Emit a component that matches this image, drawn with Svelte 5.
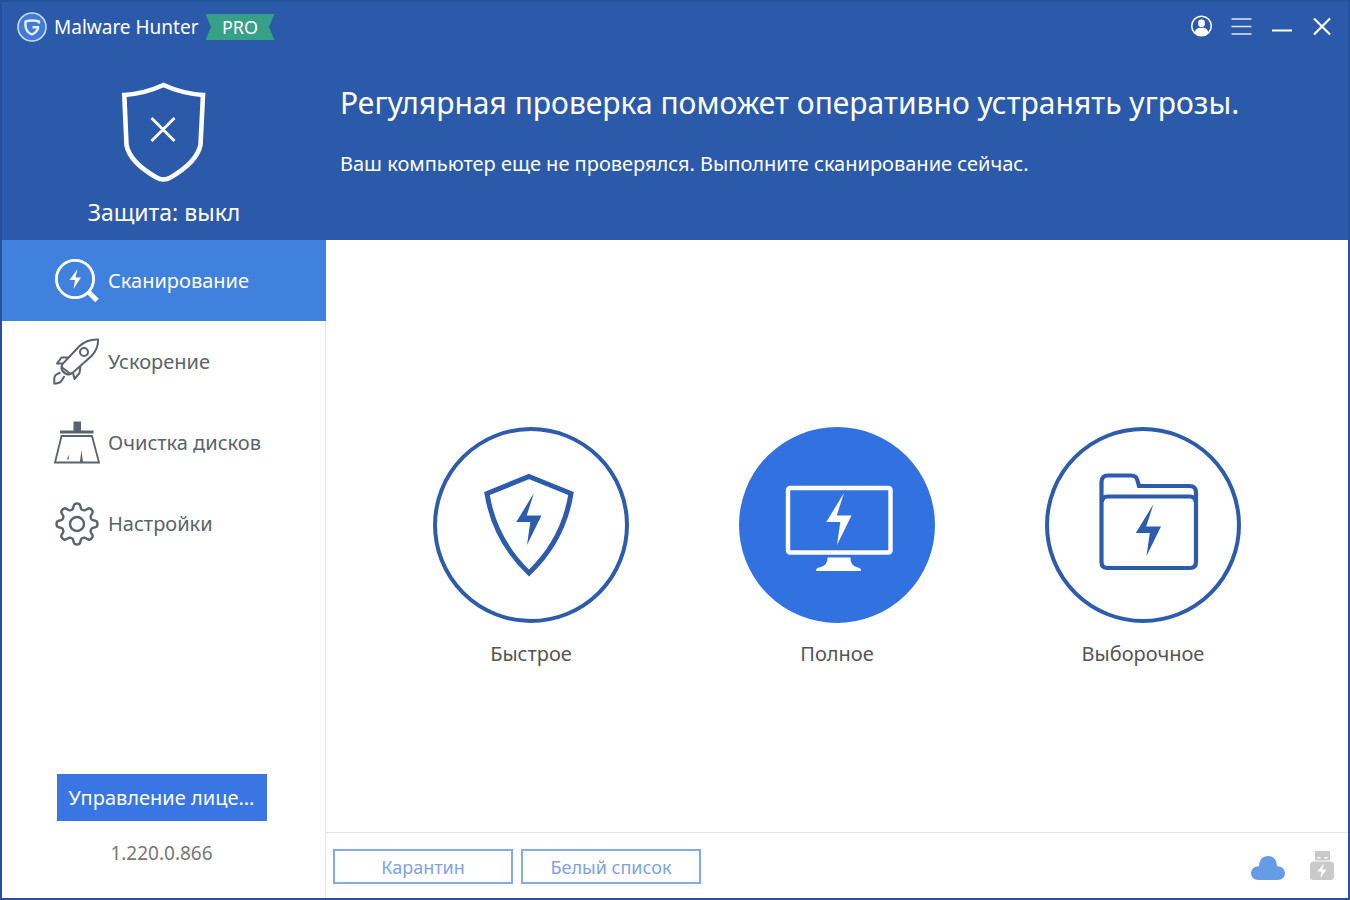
<script lang="ts">
	type Section = 'scan' | 'boost' | 'clean' | 'settings';

	let active = $state<Section>('scan');
	let mode = $state('full');

	const sections: { id: Section; label: string }[] = [
		{ id: 'scan', label: 'Сканирование' },
		{ id: 'boost', label: 'Ускорение' },
		{ id: 'clean', label: 'Очистка дисков' },
		{ id: 'settings', label: 'Настройки' }
	];

	const modes = [
		{ id: 'quick', label: 'Быстрое' },
		{ id: 'full', label: 'Полное' },
		{ id: 'custom', label: 'Выборочное' }
	];

	const bolt = 'M101 66 83.3 95H97.3L94 118 108.5 88.5H93.7Z';

	// eight rounded teeth
	function gear(cx: number, cy: number) {
		const points: string[] = [];
		for (let i = 0; i < 160; i++) {
			const a = (i / 160) * Math.PI * 2;
			const r = 17.8 + 2.8 * Math.tanh(1.8 * Math.cos(8 * a));
			points.push(`${(cx + r * Math.sin(a)).toFixed(2)} ${(cy - r * Math.cos(a)).toFixed(2)}`);
		}
		return `M${points.join('L')}Z`;
	}
</script>

<div class="window">
	<header>
		<div class="titlebar">
			<div class="brand">
				<svg width="30" height="30" viewBox="0 0 30 30" aria-hidden="true">
					<circle cx="15" cy="15" r="14" fill="#3f7bd8" stroke="#c9d9f3" stroke-width="1.6" />
					<path d="M22 11.5V9.5Q15 7.5 8.5 9.5V14Q9 20 15 22.5 20.5 20 21.2 15.2H15.5" fill="none" stroke="#e8effb" stroke-width="2.4" stroke-linejoin="round" />
				</svg>
				<span>Malware Hunter</span>
				<span class="pro">PRO</span>
			</div>
			<div class="controls">
				<button type="button" aria-label="Аккаунт">
					<svg width="24" height="24" viewBox="0 0 24 24">
						<circle cx="11.5" cy="11" r="9.8" fill="none" stroke="#fff" stroke-width="1.5" />
						<rect x="8.2" y="4.5" width="6.6" height="7.5" rx="3" fill="#fff" />
						<path d="M4.8 17.5Q5.5 13.2 9.5 12.8h4Q17.5 13.2 18.2 17.5 15.5 21 11.5 21T4.8 17.5Z" fill="#fff" />
					</svg>
				</button>
				<button type="button" aria-label="Меню">
					<svg width="24" height="24" viewBox="0 0 24 24">
						<path d="M1.5 4h20M1.5 11.5h20M1.5 19h20" stroke="#dfe8f6" stroke-width="1.6" />
					</svg>
				</button>
				<button type="button" aria-label="Свернуть">
					<svg width="24" height="24" viewBox="0 0 24 24">
						<path d="M2 15.500h20" stroke="#fff" stroke-width="2" />
					</svg>
				</button>
				<button type="button" aria-label="Закрыть">
					<svg width="24" height="24" viewBox="0 0 24 24">
						<path d="M4 3.5 20 19.5M20 3.5 4 19.5" stroke="#fff" stroke-width="2.2" />
					</svg>
				</button>
			</div>
		</div>
		<div class="summary">
			<div class="protection">
				<svg width="86" height="102" viewBox="0 0 86 102" fill="none" stroke="#fff" aria-hidden="true">
					<path d="M42.5 3Q24 11.5 3.3 13L5.5 63Q8.5 80 35.5 95.5 42.5 99.5 49.5 95.5 76 80 79.5 63L82 13Q61 11.5 42.5 3Z" stroke-width="4.6" />
					<path d="M30.5 36 53.5 59M53.5 36 30.5 59" stroke-width="2.8" />
				</svg>
				<p>Защита: выкл</p>
			</div>
			<div class="message">
				<h1>Регулярная проверка поможет оперативно устранять угрозы.</h1>
				<p>Ваш компьютер еще не проверялся. Выполните сканирование сейчас.</p>
			</div>
		</div>
	</header>

	<div class="workspace">
		<aside>
			<nav>
				{#each sections as section}
					<button type="button" class:active={active === section.id} onclick={() => (active = section.id)}>
						<svg width="47" height="47" viewBox="0 0 47 47" fill="none" stroke="currentColor" stroke-width="2" aria-hidden="true">
							{#if section.id === 'scan'}
								<circle cx="22" cy="22" r="18.6" stroke-width="2.8" />
								<path d="M35 34.5 44 43.5" stroke-width="5" />
								<path d="M24.5 12 16.5 23H22L20.5 32 28 20.5H22.5Z" fill="currentColor" stroke="none" />
							{:else if section.id === 'boost'}
								<path d="M45 1.5Q34 1 26 8.500L9.5 26Q8.5 27.5 9 29.5L17 35.5Q18.5 35.5 20 34.5L38.5 18Q45.5 10.5 45 1.5Z" />
								<path d="M9 28Q7.5 30.5 10 33.5T16 36.5L18.500 35.5" />
								<circle cx="31" cy="14" r="4" />
								<path d="M15 19.5H8.5L4 25.5H10M27.5 28 26.5 35 21.5 41 20 35" stroke-linejoin="round" />
								<path d="M7.5 34.5Q1.5 36.5 1.3 40V45.5Q5.5 46 8 43.5L11.5 38" />
							{:else if section.id === 'clean'}
								<path d="M20.5 2.5H28V11.5H40.5V14.5H7V11.5H20.5Z" fill="currentColor" stroke="none" />
								<path d="M8.5 17H39L46 43.5H2Z" stroke-width="1.8" />
								<path d="M28.5 31 26.8 43.5H30ZM15.5 35.5 14 40.5H15.8Z" fill="currentColor" stroke="none" />
							{:else}
								<path d={gear(24, 24)} stroke-width="2.4" />
								<circle cx="24" cy="24" r="7" stroke-width="2.4" />
							{/if}
						</svg>
						<span>{section.label}</span>
					</button>
				{/each}
			</nav>
			<div class="license">
				<button type="button">Управление лице...</button>
				<p>1.220.0.866</p>
			</div>
		</aside>

		<main>
			<div class="modes">
				{#each modes as item}
					<button type="button" class:selected={mode === item.id} onclick={() => (mode = item.id)}>
						<svg width="196" height="196" viewBox="0 0 196 196" fill="none" stroke="currentColor" aria-hidden="true">
							<circle class="disc" cx="98" cy="98" r="96" stroke-width="4" />
							{#if item.id === 'quick'}
								<path d="M96 49.5 138 66.5C133 98 118 125 96 146 74 125 59 98 54 66.5Z" stroke-width="5" />
								<path d={bolt} fill="currentColor" stroke="none" />
							{:else if item.id === 'full'}
								<rect x="49" y="61" width="102.5" height="64.5" rx="2" stroke-width="4.4" />
								<path d="M88.5 130.5h23q-.5 8 7 10 3.5.3 3.5 3.5H77q0-3.2 3.5-3.5 8.5-2 8-10Z" fill="currentColor" stroke="none" />
								<path d={bolt} transform="translate(4 0)" fill="currentColor" stroke="none" />
							{:else}
								<path d="M56.5 135V55Q56.5 48.5 63 48.5H86Q91.5 48.5 92.5 53.5L94 59H144.5Q151 59 151 65.5V135Q151 141 145 141H62.5Q56.5 141 56.5 135Z" stroke-width="4.2" />
								<path d="M57 75Q57 69.5 63 69.5H144.5Q150.5 69.5 150.5 75" stroke-width="4" />
								<path d={bolt} transform="translate(7.5 11)" fill="currentColor" stroke="none" />
							{/if}
						</svg>
						<span>{item.label}</span>
					</button>
				{/each}
			</div>
		</main>

		<footer>
			<button type="button">Карантин</button>
			<button type="button">Белый список</button>
			<div class="status">
				<svg width="34" height="34" viewBox="0 0 34 34" role="img" aria-label="Облако">
					<path d="M7.5 30Q0 29.5 0 23 .5 16.5 8 16 8.5 6 17 6T26 16Q33.5 16.5 34 23 34 29.5 26.5 30Z" fill="#669be5" />
				</svg>
				<svg width="24" height="34" viewBox="0 0 24 34" role="img" aria-label="USB">
					<path d="M5 1H20V10.5H5Z" fill="#c9c9c9" />
					<rect x="0" y="11.5" width="24" height="18.5" rx="3.5" fill="#c9c9c9" />
					<path d="M7.5 7h3v1.5h-3ZM14.5 7h3v1.5h-3ZM13.8 13.5 7.5 21.5H11.5L10.5 28 16.5 19.5H12.5Z" fill="#fff" />
				</svg>
			</div>
		</footer>
	</div>
</div>

<style>
	:global(body) { margin: 0; background: #fff; font-family: "Noto Sans", "Open Sans", sans-serif; color: #555; }
	.window {
		box-sizing: border-box;
		display: flex;
		flex-direction: column;
		min-height: 100vh;
		border: 2px solid #26529c;
	}
	h1, p { margin: 0; font-weight: 400; }
	button { margin: 0; padding: 0; border: 0; background: none; color: inherit; font: inherit; cursor: pointer; }
	svg { display: block; flex: none; }
	header { background: #2b5aaa; color: #fff; padding-bottom: 12px; }
	.titlebar { display: flex; align-items: center; justify-content: space-between; height: 50px; padding: 0 6px 0 15px; }
	.brand { display: flex; align-items: center; gap: 7px; font-size: 19px; line-height: 26px; }
	.pro {
		width: 69px;
		font-size: 18px;
		text-align: center;
		background: #36a089;
		clip-path: polygon(0 0, 100% 0, 92% 50%, 100% 100%, 0 100%, 8% 50%);
	}
	.controls { display: flex; }
	.controls button { display: grid; place-items: center; width: 40px; height: 40px; }
	.summary, .workspace { display: grid; grid-template-columns: 324px minmax(0, 1fr); }
	.protection { display: grid; justify-items: center; gap: 12px; padding-top: 30px; font-size: 23px; line-height: 32px; }
	.message { padding: 30px 14px 0; }
	h1 { font-size: 30px; line-height: 42px; }
	.message p { margin-top: 20px; font-size: 20px; line-height: 40px; }
	.workspace { flex: 1; grid-template-rows: 1fr auto; }
	aside {
		grid-row: 1 / 3;
		display: flex;
		flex-direction: column;
		justify-content: space-between;
		border-right: 1px solid #e4e4e6;
	}
	nav { display: grid; margin-right: -1px; }
	nav button { display: flex; align-items: center; gap: 8px; height: 81px; padding-left: 51px; color: #59636b; font-size: 20px; }
	nav .active { background: #4081dd; color: #fff; }
	.license { display: grid; justify-items: center; gap: 16px; padding: 0 4px 29px 0; font-size: 19px; line-height: 32px; color: #777; }
	.license button { width: 210px; height: 47px; background: #3976e3; color: #fff; font-size: 20px; }
	main { display: grid; place-items: center; }
	.modes { display: flex; gap: 110px; padding-top: 24px; }
	.modes button { display: grid; justify-items: center; gap: 16px; width: 196px; font-size: 20px; line-height: 30px; }
	.modes svg { color: #2d5cab; }
	.modes .selected svg { color: #fff; }
	.modes .selected .disc { fill: #3272e0; stroke: #3272e0; }
	footer { display: flex; align-items: center; gap: 8px; padding: 16px 14px 14px 7px; border-top: 1px solid #e4e4e6; }
	footer button { width: 180px; height: 35px; border: 2px solid #84aae8; color: #7ba3e6; font-size: 18px; line-height: 24px; }
	.status { display: flex; gap: 25px; margin-left: auto; }
</style>
